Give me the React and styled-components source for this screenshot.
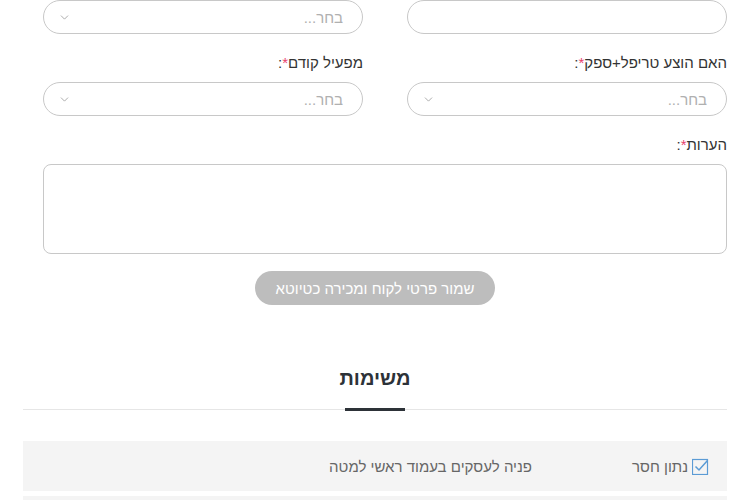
import styled, { createGlobalStyle } from 'styled-components';
import { ChevronDown } from 'lucide-react';

const Global = createGlobalStyle`
  body {
    margin: 0;
    background: #fff;
    direction: rtl;
    font-family: "Liberation Sans", "DejaVu Sans", sans-serif;
    color: #333;
  }
`;

function Select() {
  return (
    <SelectBox>
      <Placeholder>בחר...</Placeholder>
      <ChevronDown size={13} color="#999" strokeWidth={1.5} />
    </SelectBox>
  );
}

function Label({ children }) {
  return (
    <LabelText>
      {children}
      <Star>*</Star>:
    </LabelText>
  );
}

export default function App() {
  return (
    <>
      <Global />
      <Page>
        <Form>
          <Grid>
            <Field>
              <TextInput />
            </Field>
            <Field>
              <Select />
            </Field>
            <Field>
              <Label>האם הוצע טריפל+ספק</Label>
              <Select />
            </Field>
            <Field>
              <Label>מפעיל קודם</Label>
              <Select />
            </Field>
            <Field wide>
              <Label>הערות</Label>
              <TextArea />
            </Field>
          </Grid>
          <SaveButton>שמור פרטי לקוח ומכירה כטיוטא</SaveButton>
        </Form>

        <Tabs>
          <Tab>משימות</Tab>
        </Tabs>

        <TaskList>
          <TaskRow>
            <TaskStatus>
              <svg width="18" height="17" viewBox="0 0 18 17">
                <rect x="0.5" y="1.5" width="15" height="15" fill="none" stroke="#5b9bd5" strokeWidth="1.2" />
                <path d="M3.5 8.5 L7 12 L15.5 2.5" fill="none" stroke="#5b9bd5" strokeWidth="1.5" />
              </svg>
              נתון חסר
            </TaskStatus>
            <TaskText>פניה לעסקים בעמוד ראשי למטה</TaskText>
          </TaskRow>
          <TaskRow />
        </TaskList>
      </Page>
    </>
  );
}

const Page = styled.div`
  padding: 0 23px;
`;

const Form = styled.div`
  display: flex;
  flex-direction: column;
  align-items: center;
`;

const Grid = styled.div`
  width: calc(100% - 20px);
  margin-left: 20px;
  display: grid;
  grid-template-columns: 1fr 1fr;
  column-gap: 44px;
  row-gap: 19px;
`;

const Field = styled.div`
  display: flex;
  flex-direction: column;
  gap: 9px;
  grid-column: ${(p) => (p.wide ? '1 / -1' : 'auto')};
`;

const LabelText = styled.div`
  font-size: 15px;
  line-height: 20px;
  color: #333;
`;

const Star = styled.span`
  color: #e83e6c;
`;

const TextInput = styled.div`
  height: 34px;
  box-sizing: border-box;
  border: 1px solid #c8c8c8;
  border-radius: 17px;
`;

const SelectBox = styled.div`
  height: 34px;
  box-sizing: border-box;
  border: 1px solid #c8c8c8;
  border-radius: 17px;
  display: flex;
  align-items: center;
  justify-content: space-between;
  padding: 0 19px 0 14px;
`;

const Placeholder = styled.span`
  font-size: 15px;
  color: #b0b0b0;
`;

const TextArea = styled.div`
  height: 90px;
  box-sizing: border-box;
  border: 1px solid #c8c8c8;
  border-radius: 8px;
`;

const SaveButton = styled.button`
  margin-top: 17px;
  width: 240px;
  height: 34px;
  border: none;
  border-radius: 17px;
  background: #bdbdbd;
  color: #fff;
  font-family: inherit;
  font-size: 15px;
`;

const Tabs = styled.div`
  margin-top: 61px;
  border-bottom: 1px solid #e6e6e6;
  display: flex;
  justify-content: center;
`;

const Tab = styled.div`
  width: 60px;
  text-align: center;
  font-size: 20px;
  font-weight: bold;
  color: #2d3238;
  line-height: 24px;
  padding-bottom: 18px;
  margin-bottom: -2px;
  border-bottom: 3px solid #2d3238;
  white-space: nowrap;
  display: flex;
  justify-content: center;
`;

const TaskList = styled.div`
  margin-top: 31px;
  display: flex;
  flex-direction: column;
  gap: 5px;
`;

const TaskRow = styled.div`
  height: 50px;
  background: #f4f4f4;
  display: flex;
  align-items: center;
  padding-right: 17px;
  font-size: 15px;
  color: #666;
`;

const TaskStatus = styled.div`
  width: 178px;
  display: flex;
  align-items: center;
  gap: 4px;
`;

const TaskText = styled.div``;
